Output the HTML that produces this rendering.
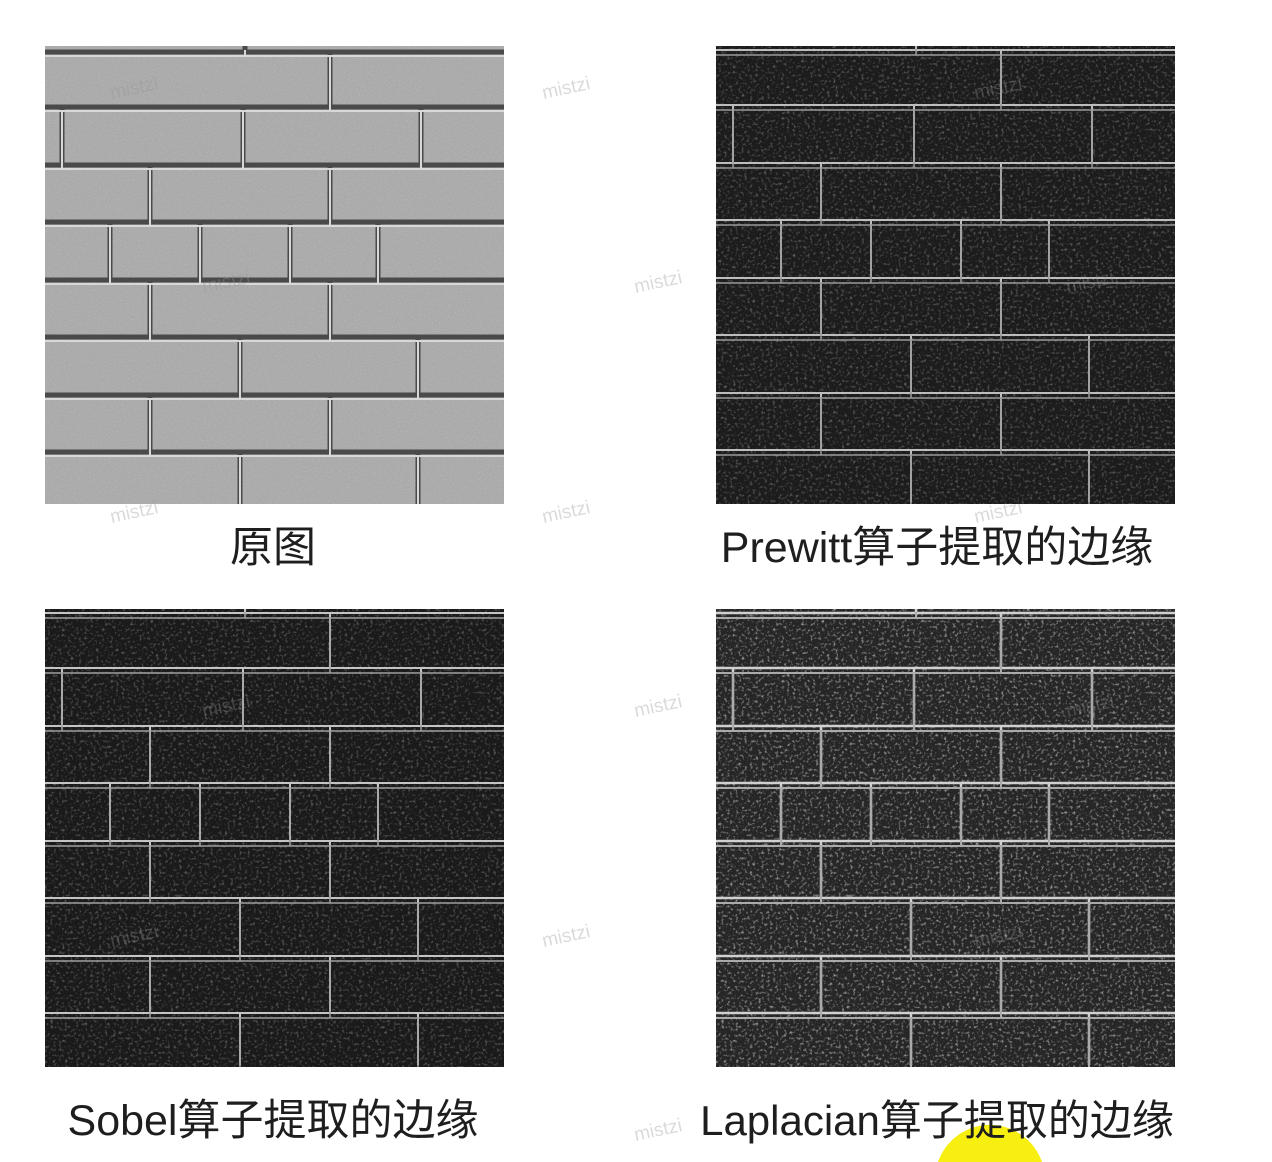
<!DOCTYPE html>
<html style="overflow:hidden;height:1162px"><head><meta charset="utf-8"><style>
body{margin:0;width:1272px;height:1162px;background:#fff;position:relative;overflow:hidden;font-family:"Liberation Sans","Noto Sans CJK SC",sans-serif}
svg.b{position:absolute;width:459px;height:458px}
.lbl{position:absolute;font-size:43px;color:#1e1e1e;white-space:nowrap;line-height:1;transform:translateX(-50%)}
.wm{position:absolute;font-size:19px;color:rgba(150,150,150,.35);transform:rotate(-12deg)}
</style></head><body>
<svg width="0" height="0" style="position:absolute">
<defs>
<filter id="n"><feTurbulence type="fractalNoise" baseFrequency="0.9" numOctaves="2" seed="3"/><feColorMatrix values="0 0 0 0 1  0 0 0 0 1  0 0 0 0 1  0 0 0 1.4 -0.75"/></filter>
<filter id="n2"><feTurbulence type="fractalNoise" baseFrequency="0.35" numOctaves="2" seed="7"/><feColorMatrix values="0 0 0 0 1  0 0 0 0 1  0 0 0 0 1  0 0 0 3 -1.6"/></filter>
<symbol id="lines" viewBox="0 0 459 458">
<g fill="none">
<path d="M0 6H459M0 61H459M0 119H459M0 176H459M0 234H459M0 291H459M0 349H459M0 406H459"/>
<path d="M200 0V6M285 6V61M17 61V119M198 61V119M376 61V119M105 119V176M285 119V176M65 176V234M155 176V234M245 176V234M333 176V234M105 234V291M285 234V291M195 291V349M373 291V349M105 349V406M285 349V406M195 406V458M373 406V458"/>
</g></symbol>
</defs></svg>

<svg class="b" style="left:45px;top:46px" viewBox="0 0 459 458">
<rect width="459" height="458" fill="#aaa"/>
<rect width="459" height="458" filter="url(#n)" opacity=".5"/>
<use href="#lines" width="459" height="458" stroke="#4a4a4a" stroke-width="5"/>
<use href="#lines" width="459" height="458" stroke="#d8d8d8" stroke-width="2" transform="translate(0,4)"/>
</svg>

<svg class="b" style="left:716px;top:46px" viewBox="0 0 459 458">
<rect width="459" height="458" fill="#1c1c1c"/>
<rect width="459" height="458" filter="url(#n2)" opacity=".3"/>
<use href="#lines" width="459" height="458" stroke="#bdbdbd" stroke-width="2" transform="translate(0,-2)"/>
<use href="#lines" width="459" height="458" stroke="#9a9a9a" stroke-width="1.5" transform="translate(0,3)"/>
</svg>

<svg class="b" style="left:45px;top:609px" viewBox="0 0 459 458">
<rect width="459" height="458" fill="#1a1a1a"/>
<rect width="459" height="458" filter="url(#n2)" opacity=".3"/>
<use href="#lines" width="459" height="458" stroke="#c4c4c4" stroke-width="2" transform="translate(0,-2)"/>
<use href="#lines" width="459" height="458" stroke="#a0a0a0" stroke-width="1.5" transform="translate(0,3)"/>
</svg>

<svg class="b" style="left:716px;top:609px" viewBox="0 0 459 458">
<rect width="459" height="458" fill="#262626"/>
<rect width="459" height="458" filter="url(#n2)" opacity=".55"/>
<use href="#lines" width="459" height="458" stroke="#d0d0d0" stroke-width="2.5" transform="translate(0,-2)"/>
<use href="#lines" width="459" height="458" stroke="#aaa" stroke-width="2" transform="translate(0,3)"/>
</svg>

<svg style="position:absolute;left:930px;top:1120px" width="120" height="42" viewBox="0 0 120 42">
<path d="M8 42A55 55 0 0 1 112 42Z" fill="#f7ef10"/>
</svg>

<div class="lbl" style="left:273px;top:527px">原图</div>
<div class="lbl" style="left:937px;top:527px">Prewitt算子提取的边缘</div>
<div class="lbl" style="left:273px;top:1100px">Sobel算子提取的边缘</div>
<div class="lbl" style="left:937px;top:1100px;font-size:42px">Laplacian算子提取的边缘</div>

<div class="wm" style="left:110px;top:78px">mistzi</div>
<div class="wm" style="left:542px;top:78px">mistzi</div>
<div class="wm" style="left:974px;top:78px">mistzi</div>
<div class="wm" style="left:202px;top:272px">mistzi</div>
<div class="wm" style="left:634px;top:272px">mistzi</div>
<div class="wm" style="left:1066px;top:272px">mistzi</div>
<div class="wm" style="left:110px;top:502px">mistzi</div>
<div class="wm" style="left:542px;top:502px">mistzi</div>
<div class="wm" style="left:974px;top:502px">mistzi</div>
<div class="wm" style="left:202px;top:696px">mistzi</div>
<div class="wm" style="left:634px;top:696px">mistzi</div>
<div class="wm" style="left:1066px;top:696px">mistzi</div>
<div class="wm" style="left:110px;top:926px">mistzi</div>
<div class="wm" style="left:542px;top:926px">mistzi</div>
<div class="wm" style="left:974px;top:926px">mistzi</div>
<div class="wm" style="left:634px;top:1120px">mistzi</div>
</body></html>
